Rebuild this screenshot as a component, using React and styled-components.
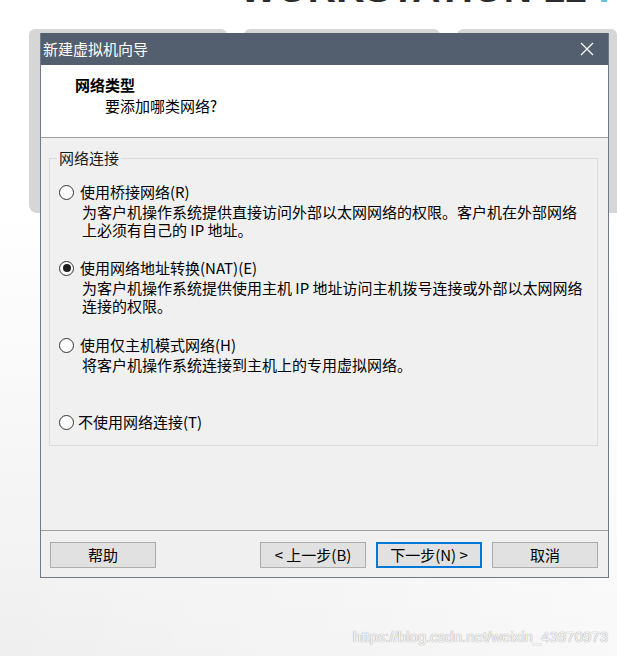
import React from "react";
import styled, { createGlobalStyle } from "styled-components";

const GlobalStyle = createGlobalStyle`
  body {
    margin: 0;
    font-family: "Noto Sans CJK SC", "Noto Sans", sans-serif;
    font-size: 15px;
    color: #000;
  }
`;

const Page = styled.div`
  position: relative;
  width: 617px;
  height: 656px;
  overflow: hidden;
  background:
    linear-gradient(to right, rgba(255, 255, 255, 0) 0, rgba(255, 255, 255, 0.6) 100%),
    linear-gradient(to bottom, #fff 0, #fff 210px, #efefef 100%);
`;

const Banner = styled.div`
  height: 29px;
  overflow: hidden;
`;

const BannerText = styled.div`
  margin: -31px 0 0 240px;
  font-family: "Liberation Sans", Arial, sans-serif;
  font-weight: 700;
  font-size: 39px;
  letter-spacing: 0.3px;
  line-height: 1;
  white-space: nowrap;
  color: #2b2b2b;

  span {
    color: #5bc0eb;
  }
`;

const Backdrop = styled.div`
  margin-left: 29px;
`;

const TabRow = styled.div`
  display: flex;
  gap: 17px;
  height: 6px;
`;

const Tab = styled.div`
  flex: ${(p) => (p.$width ? `0 0 ${p.$width}px` : "1")};
  background: #d6d6d6;
  border-radius: 6px 6px 0 0;
`;

const BackdropBody = styled.div`
  height: 178px;
  background: #d6d6d6;
  border-bottom-left-radius: 8px;
`;

const Dialog = styled.div`
  position: absolute;
  left: 40px;
  top: 33px;
  width: 569px;
  box-sizing: border-box;
  border: 1px solid #6f7987;
  border-top: none;
  background: #f0f0f0;
  display: flex;
  flex-direction: column;
`;

const TitleBar = styled.div`
  height: 32px;
  background: #535f6e;
  color: #fff;
  display: flex;
  align-items: center;
  justify-content: space-between;
  padding: 0 14px 0 2px;
  line-height: 18px;
`;

const Header = styled.div`
  height: 73px;
  box-sizing: border-box;
  background: #fff;
  border-bottom: 1px solid #a0a0a0;
  padding: 11px 0 0 34px;
  line-height: 18px;
`;

const HeaderTitle = styled.div`
  font-weight: 700;
`;

const HeaderSub = styled.div`
  margin: 3px 0 0 30px;
`;

const Body = styled.div`
  height: 393px;
  box-sizing: border-box;
  border-bottom: 1px solid #a0a0a0;
  padding: 11px 10px 0 8px;
`;

const Group = styled.fieldset`
  margin: 0;
  border: 1px solid #dcdcdc;
  padding: 0 0 14px 9px;
  min-width: 0;
`;

const Legend = styled.legend`
  padding: 0 2px;
  margin-left: -2px;
  line-height: 18px;
  color: #1a1a1a;
`;

const Option = styled.div`
  margin-top: ${(p) => p.$gap}px;
  line-height: 18px;
`;

const OptionRow = styled.div`
  display: flex;
  align-items: center;
  gap: ${(p) => (p.$tight ? 4 : 6)}px;
`;

const Radio = styled.span`
  width: 15px;
  height: 15px;
  box-sizing: border-box;
  border: 1px solid #333;
  border-radius: 50%;
  background: #fff;
  display: flex;
  align-items: center;
  justify-content: center;

  &::after {
    content: "";
    width: 8px;
    height: 8px;
    border-radius: 50%;
    background: ${(p) => (p.$checked ? "#1e1e1e" : "transparent")};
  }
`;

const Desc = styled.div`
  margin: 2px 0 0 23px;
  white-space: nowrap;
`;

const Footer = styled.div`
  height: 46px;
  box-sizing: border-box;
  display: flex;
  gap: 10px;
  padding: 11px 10px 0 9px;
`;

const Spacer = styled.div`
  flex: 1;
`;

const Button = styled.button`
  width: 106px;
  height: 26px;
  box-sizing: border-box;
  background: #e1e1e1;
  border: ${(p) => (p.$primary ? "2px solid #0078d7" : "1px solid #adadad")};
  font-family: inherit;
  font-size: 15px;
  line-height: 18px;
  color: #000;
  padding: 0;
`;

const Watermark = styled.div`
  position: absolute;
  right: 9px;
  bottom: 10px;
  font-family: "Liberation Sans", Arial, sans-serif;
  font-size: 15px;
  line-height: 18px;
  color: rgba(255, 255, 255, 0.9);
  text-shadow: 0 0 1px #a8a8a8, 0 0 1px #a8a8a8;
`;

function CloseIcon() {
  return (
    <svg width="14" height="14" viewBox="0 0 14 14">
      <path d="M1 1 L13 13 M13 1 L1 13" stroke="#fff" strokeWidth="1.3" fill="none" />
    </svg>
  );
}

const options = [
  {
    gap: 16,
    label: "使用桥接网络(R)",
    desc: [
      "为客户机操作系统提供直接访问外部以太网网络的权限。客户机在外部网络",
      "上必须有自己的 IP 地址。",
    ],
  },
  {
    gap: 20,
    label: "使用网络地址转换(NAT)(E)",
    checked: true,
    desc: [
      "为客户机操作系统提供使用主机 IP 地址访问主机拨号连接或外部以太网网络",
      "连接的权限。",
    ],
  },
  {
    gap: 21,
    label: "使用仅主机模式网络(H)",
    desc: ["将客户机操作系统连接到主机上的专用虚拟网络。"],
  },
  { gap: 39, label: "不使用网络连接(T)", tight: true, desc: [] },
];

export default function App() {
  return (
    <Page>
      <GlobalStyle />
      <Banner>
        <BannerText>
          WORKSTATION 12 <span>PRO</span>
        </BannerText>
      </Banner>
      <Backdrop>
        <TabRow>
          <Tab $width={198} />
          <Tab $width={196} />
          <Tab />
        </TabRow>
        <BackdropBody />
      </Backdrop>

      <Dialog>
        <TitleBar>
          <span>新建虚拟机向导</span>
          <CloseIcon />
        </TitleBar>
        <Header>
          <HeaderTitle>网络类型</HeaderTitle>
          <HeaderSub>要添加哪类网络?</HeaderSub>
        </Header>
        <Body>
          <Group>
            <Legend>网络连接</Legend>
            {options.map((o) => (
              <Option key={o.label} $gap={o.gap}>
                <OptionRow $tight={o.tight}>
                  <Radio $checked={o.checked} />
                  <span>{o.label}</span>
                </OptionRow>
                {o.desc.length > 0 && (
                  <Desc>
                    {o.desc.map((line) => (
                      <div key={line}>{line}</div>
                    ))}
                  </Desc>
                )}
              </Option>
            ))}
          </Group>
        </Body>
        <Footer>
          <Button>帮助</Button>
          <Spacer />
          <Button>&lt; 上一步(B)</Button>
          <Button $primary>下一步(N) &gt;</Button>
          <Button>取消</Button>
        </Footer>
      </Dialog>

      <Watermark>https://blog.csdn.net/weixin_43970973</Watermark>
    </Page>
  );
}
